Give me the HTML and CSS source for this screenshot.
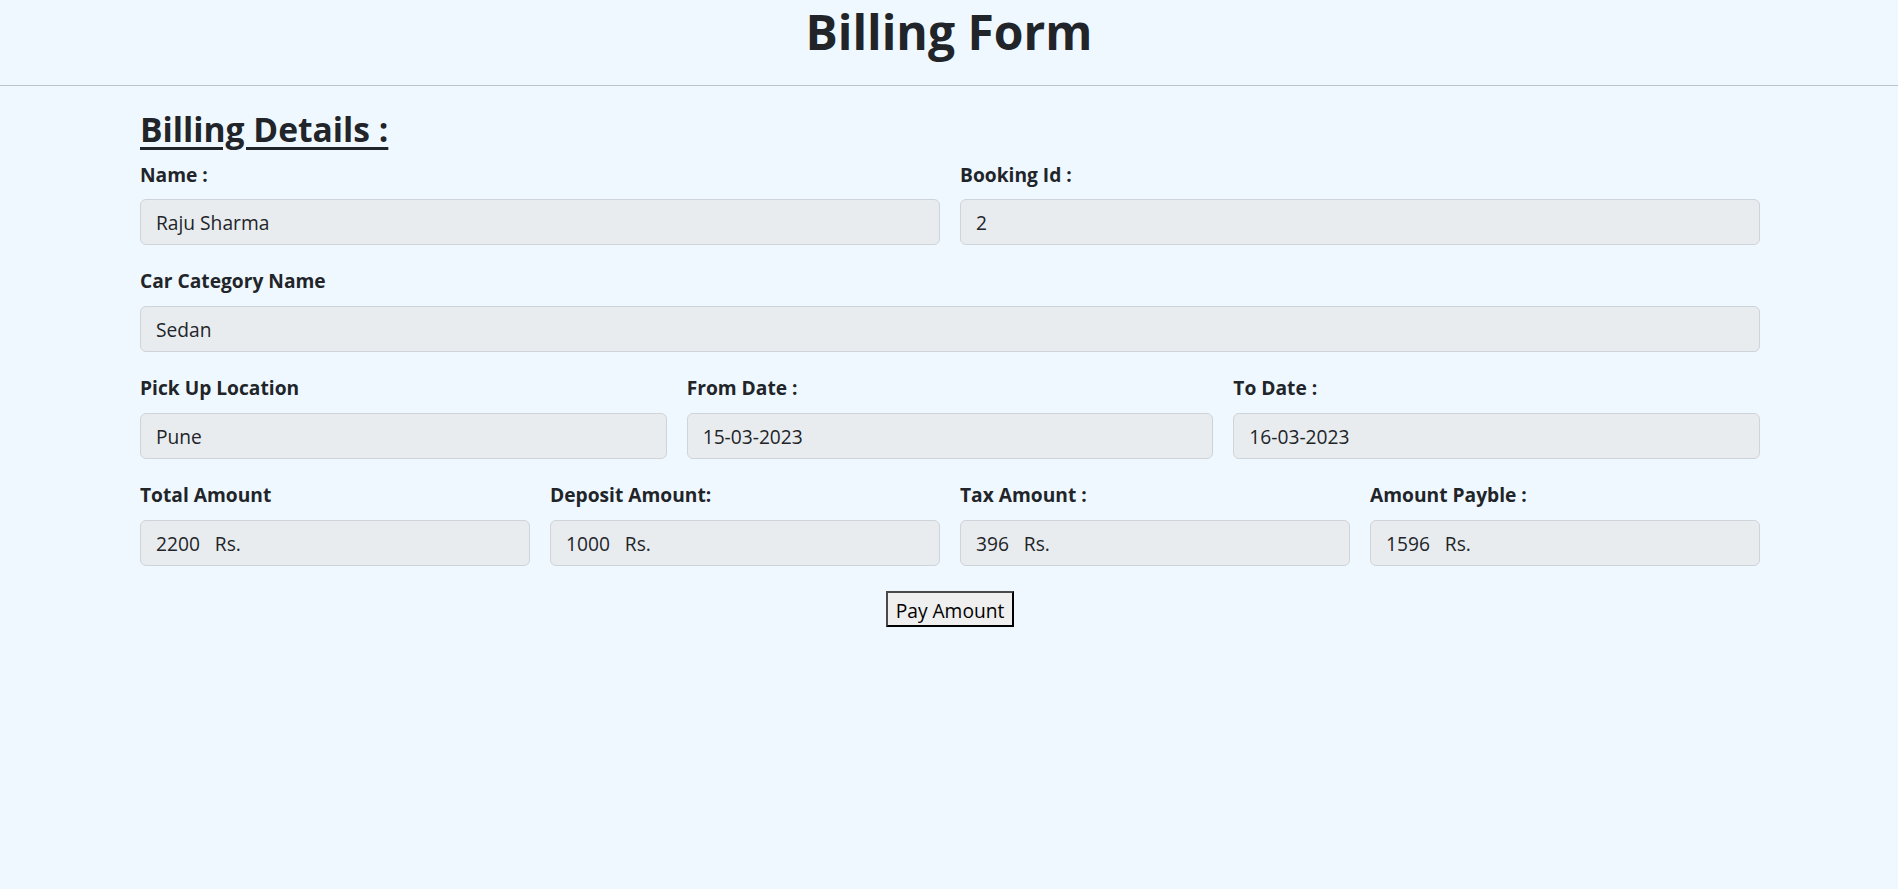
FILE: index.html
```html
<!DOCTYPE html>
<html lang="en">
<head>
<meta charset="utf-8">
<title>Billing Form</title>
<link rel="stylesheet" href="styles.css">
</head>
<body>
<header class="page-header">
  <h1 class="page-title">Billing Form</h1>
</header>
<hr class="divider">
<main class="container">
  <h3 class="section-title">Billing Details :</h3>
  <form class="billing-form">
    <div class="form-row cols-2">
      <div class="field">
        <label class="field-label">Name :</label>
        <input class="field-input" type="text" value="Raju Sharma" readonly>
      </div>
      <div class="field">
        <label class="field-label">Booking Id :</label>
        <input class="field-input" type="text" value="2" readonly>
      </div>
    </div>
    <div class="form-row cols-1">
      <div class="field">
        <label class="field-label">Car Category Name</label>
        <input class="field-input" type="text" value="Sedan" readonly>
      </div>
    </div>
    <div class="form-row cols-3">
      <div class="field">
        <label class="field-label">Pick Up Location</label>
        <input class="field-input" type="text" value="Pune" readonly>
      </div>
      <div class="field">
        <label class="field-label">From Date :</label>
        <input class="field-input" type="text" value="15-03-2023" readonly>
      </div>
      <div class="field">
        <label class="field-label">To Date :</label>
        <input class="field-input" type="text" value="16-03-2023" readonly>
      </div>
    </div>
    <div class="form-row cols-4">
      <div class="field">
        <label class="field-label">Total Amount</label>
        <input class="field-input" type="text" value="2200   Rs." readonly>
      </div>
      <div class="field">
        <label class="field-label">Deposit Amount:</label>
        <input class="field-input" type="text" value="1000   Rs." readonly>
      </div>
      <div class="field">
        <label class="field-label">Tax Amount :</label>
        <input class="field-input" type="text" value="396   Rs." readonly>
      </div>
      <div class="field">
        <label class="field-label">Amount Payble :</label>
        <input class="field-input" type="text" value="1596   Rs." readonly>
      </div>
    </div>
    <div class="actions">
      <button class="pay-button" type="button">Pay Amount</button>
    </div>
  </form>
</main>
</body>
</html>
```

FILE: styles.css
```css
html, body {
  margin: 0;
  padding: 0;
}

body {
  background: #f0f8ff;
  color: #212529;
  font-family: "Open Sans", "Noto Sans", Arial, sans-serif;
  font-size: 19.2px;
  line-height: 1.5;
  min-height: 889px;
}

.page-header {
  height: 85px;
  box-sizing: border-box;
}

.page-title {
  margin: 0;
  text-align: center;
  font-size: 48px;
  font-weight: 700;
  line-height: 63px;
}

.divider {
  margin: 0;
  border: 0;
  border-top: 1px solid #bcc3c9;
  height: 0;
}

.container {
  width: 1620px;
  margin: 0 138px 0 140px;
}

.section-title {
  margin: 22.5px 0 12px;
  font-size: 33.6px;
  font-weight: 700;
  line-height: 40px;
  text-decoration: underline;
  text-decoration-thickness: 3px;
  text-underline-offset: 5px;
}

.billing-form {
  display: flex;
  flex-direction: column;
  gap: 22.6px;
}

.form-row {
  display: grid;
  column-gap: 20px;
}

.cols-1 { grid-template-columns: 1fr; }
.cols-2 { grid-template-columns: repeat(2, 1fr); }
.cols-3 { grid-template-columns: repeat(3, 1fr); }
.cols-4 { grid-template-columns: repeat(4, 1fr); }

.field {
  display: flex;
  flex-direction: column;
  min-width: 0;
}

.field-label {
  font-weight: 700;
  font-size: 19.2px;
  line-height: 28.8px;
  margin-bottom: 9.6px;
}

.field-input {
  box-sizing: border-box;
  width: 100%;
  height: 46px;
  margin: 0;
  padding: 2px 15px 0;
  font-family: inherit;
  font-size: 19.2px;
  color: #212529;
  background: #e9ecef;
  border: 1px solid #ced4da;
  border-radius: 6px;
  outline: none;
}

.actions {
  display: flex;
  justify-content: center;
  margin-top: 3px;
}

.pay-button {
  box-sizing: border-box;
  height: 36px;
  padding: 3px 8px 0;
  font-family: inherit;
  font-size: 19.2px;
  line-height: 1;
  color: #000;
  background: #efefef;
  border: 2px solid;
  border-color: #4a4a4a #000 #000 #4a4a4a;
  border-radius: 0;
}
```
